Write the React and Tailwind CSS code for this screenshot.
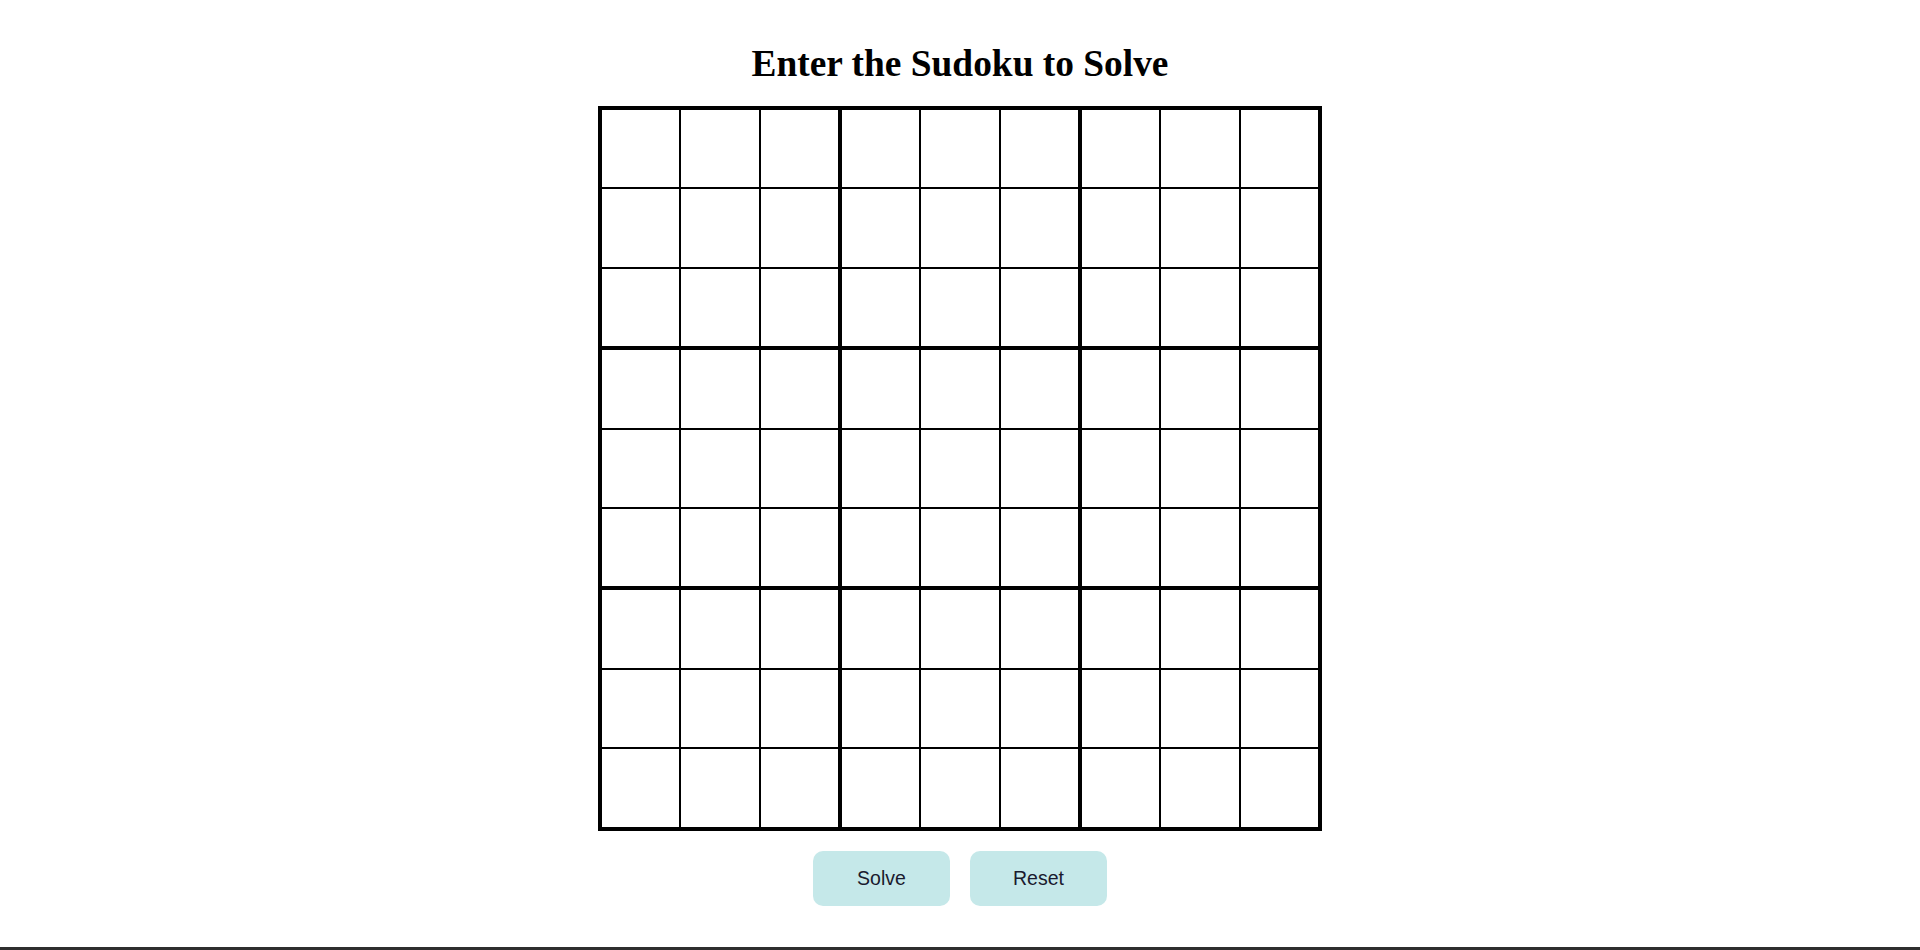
import React, { useState } from 'react';

const cells = Array.from({ length: 81 }, (_, i) => i);

const cellBorder = (i) => {
    const row = Math.floor(i / 9);
    const col = i % 9;
    const right = col === 8 ? 'border-r-0' : col === 2 || col === 5 ? 'border-r-4' : 'border-r-2';
    const bottom = row === 8 ? 'border-b-0' : row === 2 || row === 5 ? 'border-b-4' : 'border-b-2';
    return `${right} ${bottom}`;
};

const App = () => {
    const [values, setValues] = useState(Array(81).fill(''));

    const update = (i, v) => {
        const next = [...values];
        next[i] = v.replace(/[^1-9]/g, '').slice(-1);
        setValues(next);
    };

    return (
        <div className="h-[950px] flex flex-col bg-white overflow-hidden">
            <main className="flex-1 flex flex-col items-center">
                {/* Title */}
                <h1 className="pt-[43px] mb-[21px] text-[37.4px] leading-[42px] font-bold text-black font-['Liberation_Serif',serif]">
                    Enter the Sudoku to Solve
                </h1>

                {/* Board */}
                <div className="border-4 border-black grid grid-cols-[79.4px_79.4px_81.4px_79.4px_79.4px_81.4px_79.4px_79.4px_77.4px] grid-rows-[79.4px_79.4px_81.4px_79.4px_79.4px_81.4px_79.4px_79.4px_77.4px]">
                    {cells.map((i) => (
                        <div key={i} className={`border-solid border-black ${cellBorder(i)}`}>
                            <input
                                type="text"
                                value={values[i]}
                                onChange={(e) => update(i, e.target.value)}
                                className="w-full h-full text-center text-[28px] outline-none bg-white font-['Liberation_Sans',sans-serif]"
                            />
                        </div>
                    ))}
                </div>

                {/* Actions */}
                <div className="mt-5 flex gap-5">
                    <button className="w-[137px] h-[55px] pt-[2px] rounded-[10px] bg-[#c5e8e9] text-[19.5px] text-[#1a1a2e] font-['Liberation_Sans',sans-serif]">
                        Solve
                    </button>
                    <button
                        onClick={() => setValues(Array(81).fill(''))}
                        className="w-[137px] h-[55px] pt-[2px] rounded-[10px] bg-[#c5e8e9] text-[19.5px] text-[#1a1a2e] font-['Liberation_Sans',sans-serif]"
                    >
                        Reset
                    </button>
                </div>
            </main>
            <div className="h-[3px] bg-[#2e2e2e]"></div>
        </div>
    );
};

export default App;
